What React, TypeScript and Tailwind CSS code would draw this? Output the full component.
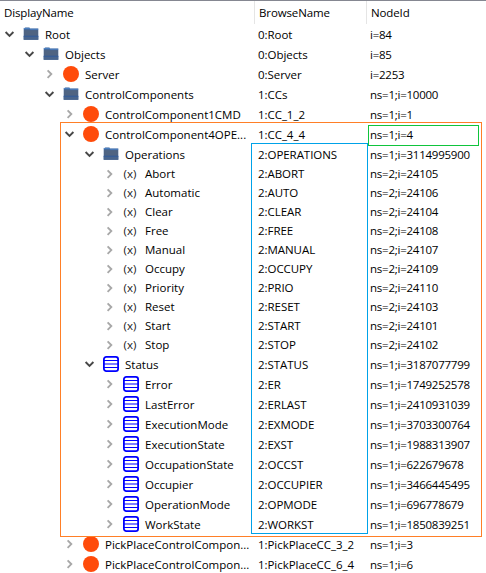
type Kind = "folder" | "object" | "method" | "variable";
type Row = { level: number; kind: Kind; open?: boolean; name: string; browse: string; id: string };

const rows: Row[] = [
  { level: 0, kind: "folder", open: true, name: "Root", browse: "0:Root", id: "i=84" },
  { level: 1, kind: "folder", open: true, name: "Objects", browse: "0:Objects", id: "i=85" },
  { level: 2, kind: "object", name: "Server", browse: "0:Server", id: "i=2253" },
  { level: 2, kind: "folder", open: true, name: "ControlComponents", browse: "1:CCs", id: "ns=1;i=10000" },
  { level: 3, kind: "object", name: "ControlComponent1CMD", browse: "1:CC_1_2", id: "ns=1;i=1" },
  { level: 3, kind: "object", open: true, name: "ControlComponent4OPE...", browse: "1:CC_4_4", id: "ns=1;i=4" },
  { level: 4, kind: "folder", open: true, name: "Operations", browse: "2:OPERATIONS", id: "ns=1;i=3114995900" },
  { level: 5, kind: "method", name: "Abort", browse: "2:ABORT", id: "ns=2;i=24105" },
  { level: 5, kind: "method", name: "Automatic", browse: "2:AUTO", id: "ns=2;i=24106" },
  { level: 5, kind: "method", name: "Clear", browse: "2:CLEAR", id: "ns=2;i=24104" },
  { level: 5, kind: "method", name: "Free", browse: "2:FREE", id: "ns=2;i=24108" },
  { level: 5, kind: "method", name: "Manual", browse: "2:MANUAL", id: "ns=2;i=24107" },
  { level: 5, kind: "method", name: "Occupy", browse: "2:OCCUPY", id: "ns=2;i=24109" },
  { level: 5, kind: "method", name: "Priority", browse: "2:PRIO", id: "ns=2;i=24110" },
  { level: 5, kind: "method", name: "Reset", browse: "2:RESET", id: "ns=2;i=24103" },
  { level: 5, kind: "method", name: "Start", browse: "2:START", id: "ns=2;i=24101" },
  { level: 5, kind: "method", name: "Stop", browse: "2:STOP", id: "ns=2;i=24102" },
  { level: 4, kind: "variable", open: true, name: "Status", browse: "2:STATUS", id: "ns=1;i=3187077799" },
  { level: 5, kind: "variable", name: "Error", browse: "2:ER", id: "ns=1;i=1749252578" },
  { level: 5, kind: "variable", name: "LastError", browse: "2:ERLAST", id: "ns=1;i=2410931039" },
  { level: 5, kind: "variable", name: "ExecutionMode", browse: "2:EXMODE", id: "ns=1;i=3703300764" },
  { level: 5, kind: "variable", name: "ExecutionState", browse: "2:EXST", id: "ns=1;i=1988313907" },
  { level: 5, kind: "variable", name: "OccupationState", browse: "2:OCCST", id: "ns=1;i=622679678" },
  { level: 5, kind: "variable", name: "Occupier", browse: "2:OCCUPIER", id: "ns=1;i=3466445495" },
  { level: 5, kind: "variable", name: "OperationMode", browse: "2:OPMODE", id: "ns=1;i=696778679" },
  { level: 5, kind: "variable", name: "WorkState", browse: "2:WORKST", id: "ns=1;i=1850839251" },
  { level: 3, kind: "object", name: "PickPlaceControlCompon...", browse: "1:PickPlaceCC_3_2", id: "ns=1;i=3" },
  { level: 3, kind: "object", name: "PickPlaceControlCompon...", browse: "1:PickPlaceCC_6_4", id: "ns=1;i=6" },
];

function Chevron({ open }: { open?: boolean }) {
  return (
    <svg viewBox="0 0 20 18" className="h-[18px] w-5 shrink-0" fill="none" strokeWidth="1.9">
      {open ? <path d="M5.6 7l3.9 3.9L13.4 7" stroke="#484848" /> : <path d="M7.6 5.4l3.7 3.7-3.7 3.7" stroke="#a8a8a8" />}
    </svg>
  );
}

function KindIcon({ kind }: { kind: Kind }) {
  if (kind === "method") {
    return <span className="-ml-px w-4 shrink-0 text-center text-[11.5px] text-[#222222]">(x)</span>;
  }
  return (
    <svg viewBox="0 0 16 16" className="h-4 w-4 shrink-0">
      {kind === "folder" && (
        <>
          <path d="M.7 2.2h1l.5-.7h4.2l.6.9h8.3v11.3H.7z" fill="#456a9c" />
          <path d="M1 4.2h14V10H1z" fill="#4f6482" />
          <path d="M.7 10h14.6v3.8H.7z" fill="#49658d" />
          <path d="M.7 10.2h14.6" stroke="#2858a0" strokeWidth=".8" />
          <path d="M.8 2.4h5.8l.8.8h7.8" stroke="#4d86cf" strokeWidth=".8" fill="none" />
        </>
      )}
      {kind === "object" && <circle cx="8" cy="8" r="8" fill="#ff4b0a" />}
      {kind === "variable" && (
        <g fill="none" stroke="#0000ff">
          <rect x=".9" y=".9" width="14.2" height="14.2" rx="2.4" strokeWidth="1.8" fill="#fff" />
          <path d="M1 4.5h14M1 8h14M1 11.5h14" strokeWidth="1.2" />
        </g>
      )}
    </svg>
  );
}

const indent = ["pl-0", "pl-5", "pl-10", "pl-[60px]", "pl-20", "pl-[100px]"];

export default function App() {
  return (
    <div className="relative h-[573px] w-[486px] overflow-hidden bg-white font-['Open_Sans','Noto_Sans',sans-serif] text-[11.5px] whitespace-pre text-black">
      <header className="flex h-6 border-t border-[#858791] leading-[23px] tracking-[-0.12px]">
        <div className="w-[254px] pl-1">DisplayName</div>
        <div className="w-28 border-l border-[#e5e5e5] pl-1">BrowseName</div>
        <div className="border-l border-[#e5e5e5] pl-1">NodeId</div>
      </header>
      {rows.map((r, i) => (
        <div key={i} className={`flex items-center ${r.kind === "method" ? "h-[19px] leading-[19px]" : "h-5 leading-5"}`}>
          <div className={`flex w-[258px] shrink-0 items-center ${indent[r.level]}`}>
            <Chevron open={r.open} />
            <span className="flex w-[25px] shrink-0 pl-[3px]">
              <KindIcon kind={r.kind} />
            </span>
            <span className={r.kind === "method" ? "" : "pt-px"}>{r.name}</span>
          </div>
          <span className={`w-28 shrink-0 tracking-[-0.05px] ${r.kind === "method" ? "" : "pt-px"}`}>{r.browse}</span>
          <span className={`tracking-[-0.24px] ${r.kind === "method" ? "" : "pt-px"}`}>{r.id}</span>
        </div>
      ))}
      <div className="absolute top-[122px] left-[60px] h-[415px] w-[422px] border border-[#ff7f27]" />
      <div className="absolute top-[143px] left-[251px] h-[391px] w-[117px] border border-[#00a2e8]" />
      <div className="absolute top-[125px] left-[368px] h-[21px] w-[111px] border border-[#0fc43c]" />
    </div>
  );
}
